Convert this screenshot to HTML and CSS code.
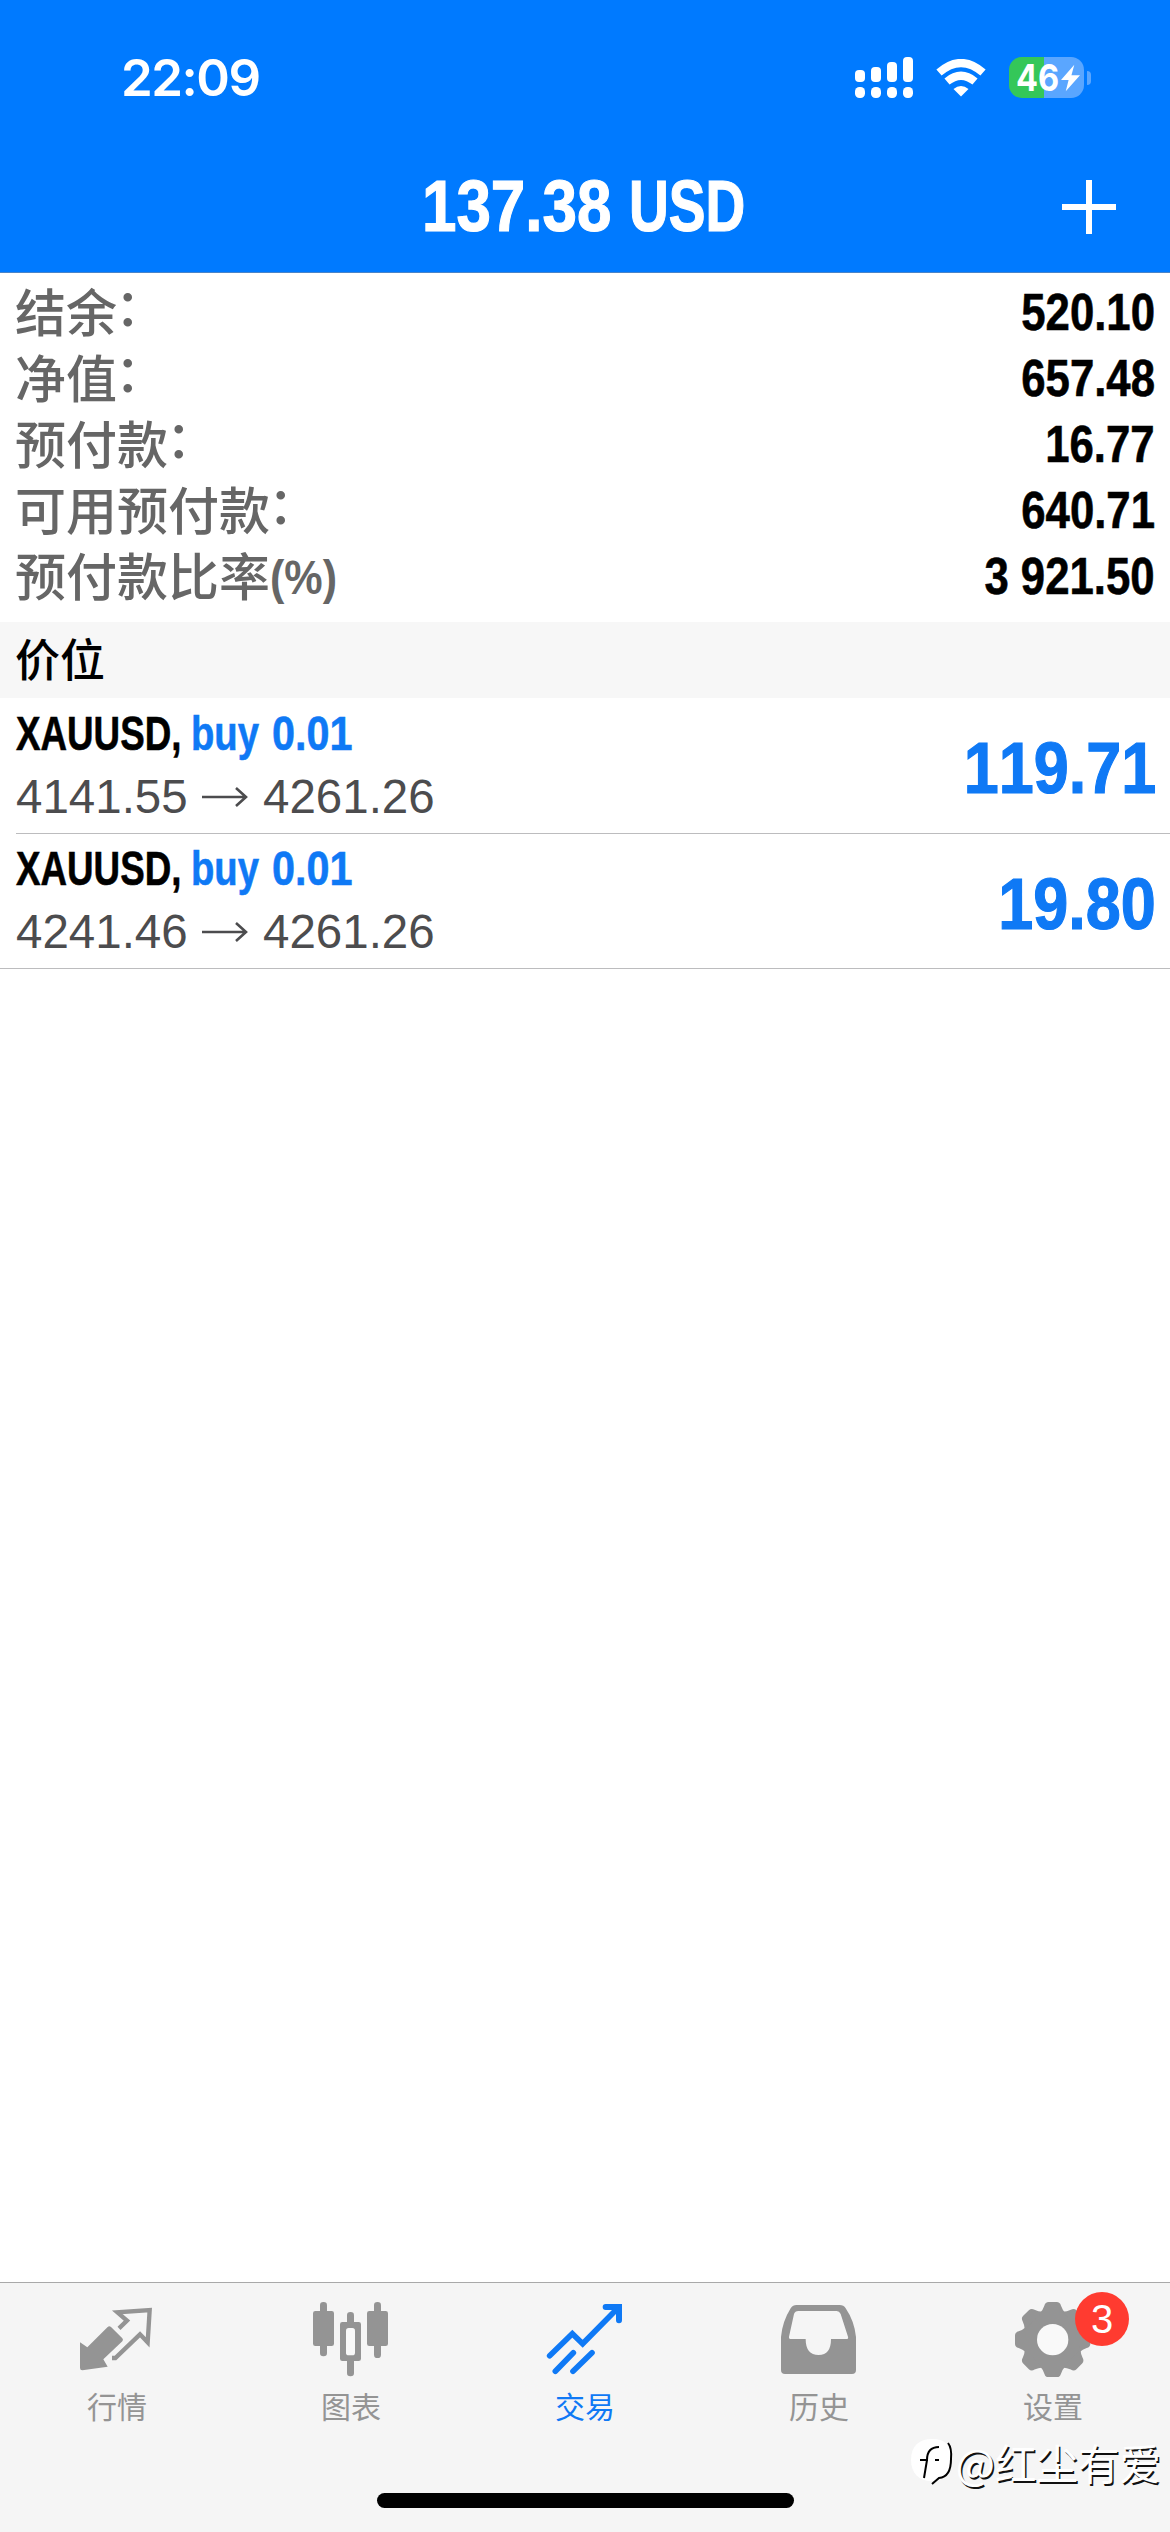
FILE: index.html
```html
<!DOCTYPE html>
<html lang="zh-CN">
<head>
    <meta charset="UTF-8">
    <meta name="viewport" content="width=device-width, initial-scale=1.0">
    <title>交易</title>
    <link rel="stylesheet" href="styles.css">
</head>
<body>
    <div class="app">
        <header class="header">
            <div class="status-bar">
                <div class="time">22:09</div>
                <div class="status-icons">
                    <svg class="signal" viewBox="0 0 58 41" fill="#fff">
                        <rect x="0" y="13" width="10" height="12" rx="4"/>
                        <rect x="16" y="10" width="10" height="15" rx="4"/>
                        <rect x="32" y="5" width="10" height="20" rx="4"/>
                        <rect x="48" y="0" width="10" height="25" rx="4"/>
                        <rect x="0" y="30" width="10" height="11" rx="4.5"/>
                        <rect x="16" y="30" width="10" height="11" rx="4.5"/>
                        <rect x="32" y="30" width="10" height="11" rx="4.5"/>
                        <rect x="48" y="30" width="10" height="11" rx="4.5"/>
                    </svg>
                    <svg class="wifi" viewBox="0 0 50 38">
                        <path d="M3 13.5Q25 -5.500 47 13.500" fill="none" stroke="#fff" stroke-width="8"/>
                        <path d="M11 22.500Q25 11 39 22.500" fill="none" stroke="#fff" stroke-width="8"/>
                        <path d="M17.500 30Q25 24 32.500 30L25 37.500Z" fill="#fff"/>
                    </svg>
                    <div class="battery">
                        <span class="battery-text">46</span>
                        <svg class="bolt" viewBox="0 0 20 28"><path d="M14 0L0 16H8L5 28L20 11H11Z" fill="#fff"/></svg>
                    </div>
                    <div class="battery-cap"></div>
                </div>
            </div>
            <div class="nav-bar">
                <h1 class="title"><span class="title-sum">137.38</span><span class="title-cur">USD</span></h1>
                <svg class="plus" viewBox="0 0 54 54"><path d="M27 0V54M0 27H54" stroke="#fff" stroke-width="6"/></svg>
            </div>
        </header>

        <section class="summary">
            <div class="summary-row"><span class="label">结余<span class="colon">：</span></span><span class="value">520.10</span></div>
            <div class="summary-row"><span class="label">净值<span class="colon">：</span></span><span class="value">657.48</span></div>
            <div class="summary-row"><span class="label">预付款<span class="colon">：</span></span><span class="value">16.77</span></div>
            <div class="summary-row"><span class="label">可用预付款<span class="colon">：</span></span><span class="value">640.71</span></div>
            <div class="summary-row"><span class="label">预付款比率<span class="percent">(%)</span></span><span class="value">3 921.50</span></div>
        </section>

        <h2 class="section-title">价位</h2>

        <section class="positions">
            <div class="position">
                <div class="position-info">
                    <div class="position-name"><span class="symbol">XAUUSD,</span><span class="side">buy</span><span class="volume">0.01</span></div>
                    <div class="position-price">
                        <span class="price-open">4141.55</span>
                        <svg class="arrow" viewBox="0 0 46 22"><path d="M0 11H44M34 2L44 11L34 20" fill="none" stroke="#4c4c4e" stroke-width="2.600"/></svg>
                        <span>4261.26</span>
                    </div>
                </div>
                <div class="profit">119.71</div>
            </div>
            <div class="position">
                <div class="position-info">
                    <div class="position-name"><span class="symbol">XAUUSD,</span><span class="side">buy</span><span class="volume">0.01</span></div>
                    <div class="position-price">
                        <span class="price-open">4241.46</span>
                        <svg class="arrow" viewBox="0 0 46 22"><path d="M0 11H44M34 2L44 11L34 20" fill="none" stroke="#4c4c4e" stroke-width="2.600"/></svg>
                        <span>4261.26</span>
                    </div>
                </div>
                <div class="profit">19.80</div>
            </div>
        </section>

        <nav class="tab-bar">
            <div class="tabs">
                <div class="tab">
                    <svg class="tab-icon" viewBox="0 0 240 240">
                        <path d="M9 136L31 151L92 90Q97 85 102 90L136 124Q140 129 136 133L79 187L92 209L16 220Q9 220 9 213Z" fill="currentColor"/>
                        <path d="M126 94L150 71L121 46L218 39L212 136L189 112L115 183H105" fill="none" stroke="currentColor" stroke-width="13"/>
                    </svg>
                    <span class="tab-label">行情</span>
                </div>
                <div class="tab">
                    <svg class="tab-icon" viewBox="0 0 240 240" fill="currentColor">
                        <rect x="27" y="15" width="21" height="163" rx="10"/>
                        <rect x="6" y="42" width="63" height="105" rx="7"/>
                        <rect x="108" y="45" width="21" height="193" rx="10"/>
                        <path fill-rule="evenodd" d="M94 75H143Q150 75 150 82V185Q150 192 143 192H94Q87 192 87 185V82Q87 75 94 75Z"/>
                        <rect x="105" y="93" width="27" height="82" rx="8" fill="#f9f9f9"/>
                        <rect x="189" y="15" width="21" height="168" rx="10"/>
                        <rect x="168" y="42" width="63" height="105" rx="7"/>
                    </svg>
                    <span class="tab-label">图表</span>
                </div>
                <div class="tab active">
                    <svg class="tab-icon" viewBox="0 0 240 240" fill="none" stroke="currentColor" stroke-width="17" stroke-linecap="round">
                        <path d="M14 176L82 110L113 140L218 34"/>
                        <path d="M182 30H222V70" stroke-width="18"/>
                        <path d="M200 30H222V54Z" fill="currentColor" stroke-width="6"/>
                        <path d="M31 223L85 167M84 223L141 167"/>
                    </svg>
                    <span class="tab-label">交易</span>
                </div>
                <div class="tab">
                    <svg class="tab-icon" viewBox="0 0 240 240">
                        <path fill="currentColor" fill-rule="evenodd" d="M52 24H182Q194 24 200 34Q226 72 231 120V219Q231 231 219 231H18Q6 231 6 219V120Q10 74 35 34Q42 24 52 24Z M58 42Q48 42 45 51L30 119Q29 126 36 126H80Q80 174 119 174Q156 174 156 126H202Q209 126 207 119L185 51Q181 42 173 42Z"/>
                    </svg>
                    <span class="tab-label">历史</span>
                </div>
                <div class="tab">
                    <svg class="tab-icon" viewBox="0 0 240 240" fill="currentColor">
                        <defs>
                            <path id="tooth" d="M-38 -80Q-29 -90 -25 -102Q-22 -113 -12 -113H12Q22 -113 25 -102Q29 -90 38 -80Z"/>
                        </defs>
                        <g transform="translate(119 128)">
                            <circle r="88"/>
                            <use href="#tooth"/>
                            <use href="#tooth" transform="rotate(45)"/>
                            <use href="#tooth" transform="rotate(90)"/>
                            <use href="#tooth" transform="rotate(135)"/>
                            <use href="#tooth" transform="rotate(180)"/>
                            <use href="#tooth" transform="rotate(225)"/>
                            <use href="#tooth" transform="rotate(270)"/>
                            <use href="#tooth" transform="rotate(315)"/>
                            <circle r="47" fill="#f9f9f9"/>
                        </g>
                    </svg>
                    <span class="badge">3</span>
                    <span class="tab-label">设置</span>
                </div>
            </div>
            <div class="home-indicator"></div>
        </nav>

        <div class="watermark">
            <svg class="watermark-logo" viewBox="0 0 46 48">
                <path d="M22 1C36 1 42 8 42 21C42 34 36 42 24 43C10 44 1 36 1 22C1 8 9 1 22 1Z" fill="#fff"/>
                <path d="M10 22H17Q17 9 29 9M17 22L14 40M25 22H29M38 5Q42 10 41 21Q41 39 29 40L22 46" fill="none" stroke="#000" stroke-width="2"/>
            </svg>
            <span class="watermark-text">@红尘有爱</span>
        </div>
    </div>
</body>
</html>
```
FILE: styles.css
```css
:root {
    --blue: #007aff;
    --text-blue: #0f79f5;
    --bar-bg: #f5f5f5;
    --gray: #949494;
    --line: #bcbcbe;
}

* {
    box-sizing: border-box;
}

body {
    margin: 0;
    background-color: #fff;
    font-family: "Liberation Sans", "Noto Sans CJK SC", sans-serif;
    font-kerning: none;
}

.app {
    position: relative;
    width: 1170px;
    height: 2532px;
    display: flex;
    flex-direction: column;
    overflow: hidden;
}

/* Header */
.header {
    height: 273px;
    background-color: var(--blue);
    border-bottom: 1px solid #4a84c8;
    color: #fff;
}

.status-bar {
    height: 141px;
    padding: 14px 79px 0 121px;
    display: flex;
    justify-content: space-between;
    align-items: center;
}

.time {
    font-family: Inter, sans-serif;
    font-size: 51px;
    font-weight: 600;
    letter-spacing: -1.5px;
}

.status-icons {
    display: flex;
    align-items: center;
}

.signal {
    width: 58px;
    height: 41px;
}

.wifi {
    width: 50px;
    height: 38px;
    margin: 0 23px 0 23px;
}

.battery {
    width: 75px;
    height: 41px;
    padding-left: 7px;
    border-radius: 13px;
    background: linear-gradient(to right, #34c759 35px, #5aa6ff 35px);
    display: flex;
    align-items: center;
}

.battery-text {
    width: 45px;
    font-family: Inter, sans-serif;
    font-size: 37px;
    font-weight: 700;
    line-height: 41px;
    transform: scaleX(0.88);
    transform-origin: left center;
}

.bolt {
    width: 19px;
    height: 28px;
    flex-shrink: 0;
}

.battery-cap {
    width: 4px;
    height: 14px;
    margin-left: 3px;
    border-radius: 0 5px 5px 0;
    background-color: #5aa6ff;
}

.nav-bar {
    height: 131px;
    padding: 0 54px 0 422px;
    display: flex;
    justify-content: space-between;
    align-items: center;
}

.title {
    margin: 0;
    font-size: 72px;
    line-height: 131px;
    display: flex;
    -webkit-text-stroke: 1.2px #fff;
}

.title span,
.position-name span {
    display: block;
    transform-origin: left center;
}

.title-sum {
    width: 207px;
    transform: scaleX(0.86);
}

.title-cur {
    width: 116px;
    transform: scaleX(0.765);
}

.plus {
    width: 54px;
    height: 54px;
}

/* Account summary */
.summary {
    height: 349px;
    padding: 7px 15px 0 15px;
}

.summary-row {
    height: 66px;
    display: flex;
    justify-content: space-between;
}

.label {
    font-family: "Noto Sans CJK SC", sans-serif;
    font-size: 51px;
    font-weight: 500;
    line-height: 60px;
    color: #666;
    display: flex;
}

.colon {
    transform: translate(-2px, -6px);
}

.percent {
    font-family: "Liberation Sans", sans-serif;
    font-size: 49px;
    font-weight: bold;
    line-height: 66px;
    transform: scaleX(0.88);
    transform-origin: left center;
}

.value {
    font-size: 51px;
    font-weight: bold;
    line-height: 66px;
    color: #000;
    -webkit-text-stroke: 0.6px #000;
    transform: scaleX(0.857);
    transform-origin: right center;
}

.section-title {
    margin: 0;
    height: 76px;
    padding-left: 15px;
    background-color: #f7f7f7;
    font-family: "Noto Sans CJK SC", sans-serif;
    font-size: 45px;
    font-weight: 500;
    line-height: 72px;
}

/* Open positions */
.position {
    height: 136px;
    margin-left: 16px;
    padding-right: 14px;
    border-bottom: 1px solid var(--line);
    display: flex;
    justify-content: space-between;
}

.position:last-child {
    height: 135px;
    margin-left: 0;
    padding-left: 16px;
}

.position-info {
    padding-top: 5px;
}

.position:last-child .position-info {
    padding-top: 4px;
}

.position-name {
    display: flex;
    font-size: 49px;
    font-weight: bold;
    line-height: 60px;
    -webkit-text-stroke: 0.6px currentColor;
}

.symbol {
    width: 175px;
    transform: scaleX(0.75);
}

.side {
    width: 81px;
    color: var(--text-blue);
    transform: scaleX(0.78);
}

.volume {
    width: 90px;
    color: var(--text-blue);
    transform: scaleX(0.845);
}

.position-price {
    display: flex;
    align-items: center;
    font-size: 47.5px;
    line-height: 67px;
    color: #4c4c4e;
}

.price-open {
    width: 186px;
}

.arrow {
    width: 46px;
    height: 22px;
    margin-right: 15px;
}

.profit {
    padding-top: 3px;
    font-size: 73px;
    font-weight: bold;
    line-height: 133px;
    color: var(--text-blue);
    -webkit-text-stroke: 1.2px currentColor;
    transform: scaleX(0.862);
    transform-origin: right center;
}

/* Tab bar */
.tab-bar {
    height: 250px;
    margin-top: auto;
    background-color: var(--bar-bg);
    border-top: 1px solid #a9a9a9;
    display: flex;
    flex-direction: column;
    align-items: center;
    justify-content: space-between;
}

.tabs {
    width: 100%;
    padding-top: 14px;
    display: grid;
    grid-template-columns: repeat(5, 1fr);
}

.tab {
    position: relative;
    display: flex;
    flex-direction: column;
    align-items: center;
    color: var(--gray);
}

.tab.active {
    color: var(--text-blue);
}

.tab-icon {
    width: 80px;
    height: 80px;
}

.tab-label {
    font-family: "Noto Sans CJK SC", sans-serif;
    font-size: 30px;
    line-height: 56px;
}

.badge {
    position: absolute;
    top: -5px;
    left: 139px;
    width: 54px;
    height: 54px;
    border-radius: 50%;
    background-color: #ff3b30;
    color: #fff;
    font-size: 40px;
    line-height: 54px;
    text-align: center;
}

.home-indicator {
    width: 417px;
    height: 15px;
    margin-bottom: 24px;
    border-radius: 8px;
    background-color: #000;
}

/* Author mark lying over the tab bar */
.watermark {
    position: absolute;
    right: 9px;
    bottom: 40px;
    display: flex;
    align-items: center;
}

.watermark-logo {
    width: 46px;
    height: 48px;
}

.watermark-text {
    font-family: "Noto Sans CJK SC", sans-serif;
    font-size: 41.5px;
    font-weight: 400;
    line-height: 60px;
    color: #fff;
    text-shadow: 1.5px 1.5px 0 #111;
}
```
